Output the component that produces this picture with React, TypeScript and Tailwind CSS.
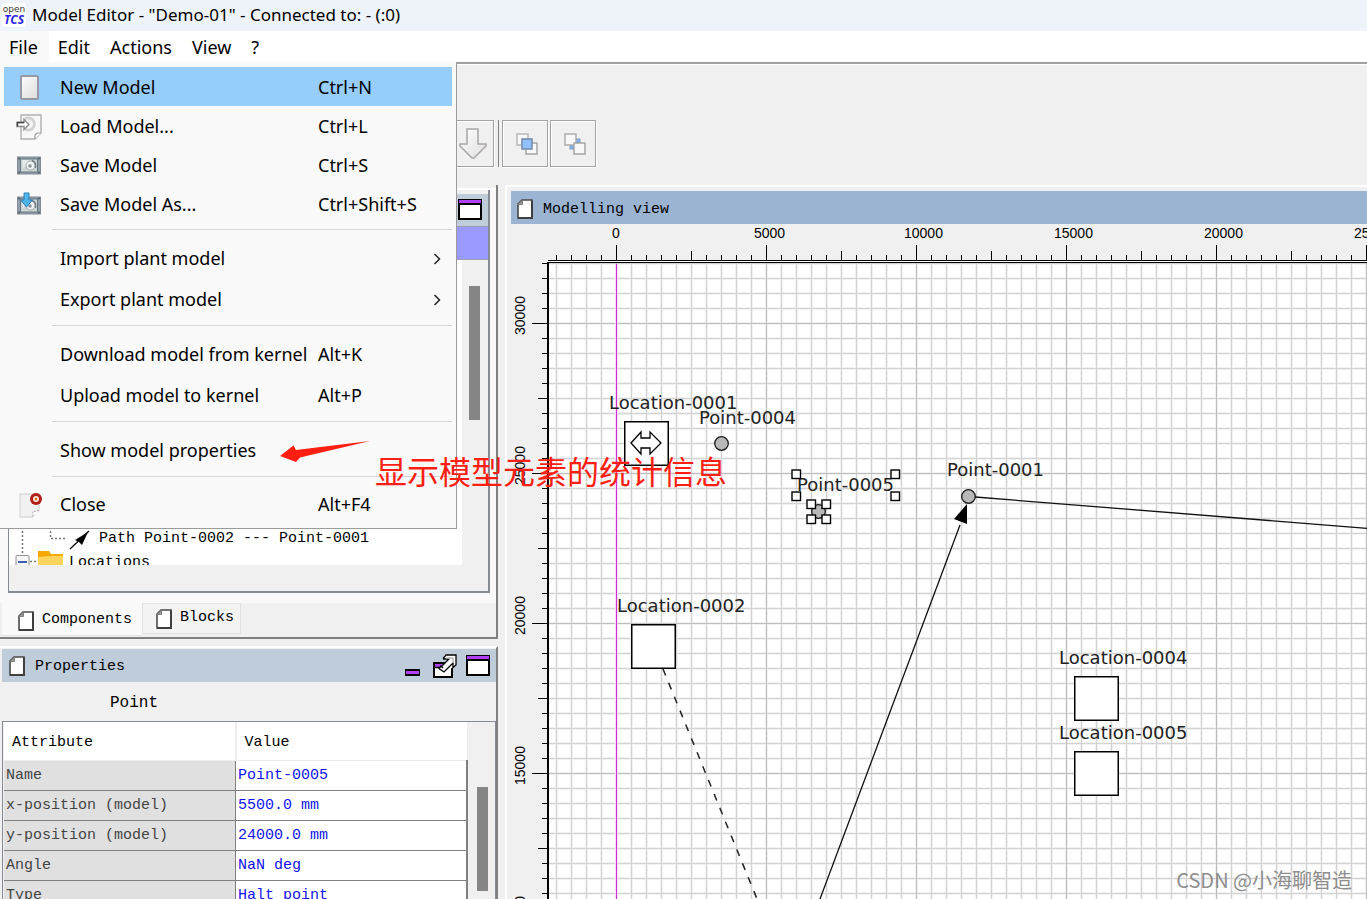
import React from "react";

const MONO = "font-['Liberation_Mono','Noto_Sans_CJK_SC',monospace]";

function DocIcon() {
  return (
    <svg width="16" height="20" viewBox="0 0 16 20" aria-hidden="true">
      <path d="M5 1H15V19H1V5Z" fill="#fff" stroke="#4a4a4a" strokeWidth="1.6" />
      <path d="M1 5.5 5.5 1V5.5Z" fill="#9a9a9a" stroke="#7d7d7d" strokeWidth="1" />
      <path d="M15 1.5V19H1" fill="none" stroke="#3f3f3f" strokeWidth="2" />
    </svg>
  );
}

function MaximizeIcon() {
  return (
    <svg width="24" height="21" viewBox="0 0 24 21" className="block" aria-hidden="true" shapeRendering="crispEdges">
      <rect width="24" height="21" fill="#000" />
      <rect x="1" y="1" width="22" height="3" fill="#b040f0" />
      <rect x="2" y="6" width="20" height="13" fill="#fff" />
    </svg>
  );
}

function MinimizeIcon() {
  return (
    <svg width="15" height="7" viewBox="0 0 15 7" className="block" aria-hidden="true" shapeRendering="crispEdges">
      <rect width="15" height="7" fill="#000" />
      <rect x="1" y="2" width="13" height="3" fill="#b040f0" />
    </svg>
  );
}

function DetachIcon() {
  return (
    <svg width="24" height="24" viewBox="0 0 24 24" className="block" aria-hidden="true">
      <path d="M1 9H19V23H1Z" fill="#fff" stroke="#000" strokeWidth="2" />
      <path d="M2 10H18V13H2Z" fill="#b040f0" />
      <path d="M2 13.500H18" stroke="#000" strokeWidth="1.500" />
      <path d="M11 1H23V12L20 13L11 20L6 15L8 12L15 6L10 4Z" fill="#fff" />
      <path d="M10 4.500 13 1H23V11L20 13.500V9L11 18L6 14.500 8 12 10 14M9 12 16 5H10" fill="none" stroke="#000" strokeWidth="1.300" />
      <path d="M13 4H20V9" fill="none" stroke="#bbb" strokeWidth="1.500" />
    </svg>
  );
}

function Logo() {
  return (
    <svg width="24" height="24" viewBox="0 0 24 24" role="img" aria-label="openTCS">
      <rect width="24" height="24" rx="2" fill="#fff" />
      <text x="12" y="9" textAnchor="middle" fontSize="9" fill="#333" className="font-['DejaVu_Sans',sans-serif]">open</text>
      <text x="12" y="21" textAnchor="middle" fontSize="12" fontWeight="700" fontStyle="italic" fill="#2a22e8" className="font-['Open_Sans',sans-serif]">TCS</text>
    </svg>
  );
}

function NewIcon() {
  return (
    <svg width="26" height="26" viewBox="0 0 26 26" aria-hidden="true">
      <defs>
        <linearGradient id="sheet" x1="0" y1="0" x2="1" y2="1">
          <stop offset="0" stopColor="#fdfdfd" />
          <stop offset="1" stopColor="#dcdcdc" />
        </linearGradient>
      </defs>
      <rect x="5" y="1" width="17" height="23" rx="1" fill="url(#sheet)" stroke="#9499a3" strokeWidth="2" />
    </svg>
  );
}

function LoadIcon() {
  return (
    <svg width="26" height="26" viewBox="0 0 26 26" aria-hidden="true">
      <path d="M5 1H25V19L19 25H5Z" fill="#f8f8f8" stroke="#b0b0b0" strokeWidth="1.400" />
      <path d="M19 25V21L21 19H25" fill="#fff" stroke="#9a9a9a" strokeWidth="1.200" />
      <path d="M9 5A6 6 0 1 1 9 15" fill="none" stroke="#d2d2d2" strokeWidth="3" />
      <path d="M1 8.500H8V5.500L13 10.500L8 15.500V12.500H1Z" fill="#fff" stroke="#8a8a8a" strokeWidth="1.400" />
      <path d="M1.500 12.500V8.500H8" fill="none" stroke="#444" strokeWidth="1.400" />
    </svg>
  );
}

function DiskShape({ top }: { top: number }) {
  return (
    <g>
      <rect x="1.500" y={top} width="23" height="17" fill="#93a0aa" stroke="#7f8c96" strokeWidth="1" />
      <rect x="4.500" y={top + 2} width="17" height="13" fill="#cdd4d6" stroke="#667580" strokeWidth="1" />
      <path d={`M6 ${top + 3}H13L7 ${top + 12}Z`} fill="#e3e8e9" />
      <circle cx="14.500" cy={top + 8.5} r="4.500" fill="#eef1f1" stroke="#a3adb1" />
      <circle cx="14" cy={top + 9} r="1.800" fill="#8a969b" />
      <path d={`M16 ${top + 3.5}Q20.500 ${top + 5} 19.500 ${top + 11}`} fill="none" stroke="#6e7c82" strokeWidth="1.400" />
      <circle cx="3" cy={top + 1.5} r="0.900" fill="#4a5862" />
      <circle cx="23" cy={top + 1.5} r="0.900" fill="#4a5862" />
      <circle cx="3" cy={top + 15.5} r="0.900" fill="#4a5862" />
      <circle cx="23" cy={top + 15.5} r="0.900" fill="#4a5862" />
    </g>
  );
}

function SaveIcon() {
  return (
    <svg width="26" height="26" viewBox="0 0 26 26" aria-hidden="true">
      <DiskShape top={4} />
    </svg>
  );
}

function SaveAsIcon() {
  return (
    <svg width="26" height="26" viewBox="0 0 26 26" aria-hidden="true">
      <DiskShape top={5} />
      <path d="M8 1H13V8H16.500L10.500 15L4.500 8H8Z" fill="#4fb4ea" stroke="#2c7fb5" strokeWidth="1" />
    </svg>
  );
}

function CloseIcon() {
  return (
    <svg width="26" height="26" viewBox="0 0 26 26" aria-hidden="true">
      <path d="M4 2H23V18L16 25H4Z" fill="#f1f1f1" stroke="#dadada" strokeWidth="1.400" />
      <path d="M17 24.500V19.500L23 18.500" fill="#fff" stroke="#a8a8a8" strokeDasharray="2 1" />
      <circle cx="20" cy="7" r="6" fill="#b3201a" />
      <circle cx="20" cy="7" r="3" fill="#f6e6d4" />
      <circle cx="20" cy="7" r="1.200" fill="#d0661c" />
    </svg>
  );
}

type Item = { label: string; keys?: string; icon?: React.ReactNode; sub?: boolean; active?: boolean; tall?: boolean };

const MENU: Item[][] = [
  [
    { label: "New Model", keys: "Ctrl+N", icon: <NewIcon />, active: true },
    { label: "Load Model...", keys: "Ctrl+L", icon: <LoadIcon /> },
    { label: "Save Model", keys: "Ctrl+S", icon: <SaveIcon /> },
    { label: "Save Model As...", keys: "Ctrl+Shift+S", icon: <SaveAsIcon /> },
  ],
  [
    { label: "Import plant model", sub: true, tall: true },
    { label: "Export plant model", sub: true, tall: true },
  ],
  [
    { label: "Download model from kernel", keys: "Alt+K", tall: true },
    { label: "Upload model to kernel", keys: "Alt+P", tall: true },
  ],
  [{ label: "Show model properties", tall: true }],
  [{ label: "Close", keys: "Alt+F4", icon: <CloseIcon /> }],
];

function FileMenu() {
  return (
    <div role="menu" aria-label="File" className="absolute top-full left-0 z-10 w-[457px] border-r border-b border-[#9b9b9b] bg-[#f9f9f9] px-1 pt-[5px] pb-[5px]">
      {MENU.map((group, g) => (
        <div key={g}>
          {g > 0 && (
            <div role="separator" className="ml-12 flex h-[14px] items-center pb-[2px]">
              <div className="h-px w-full bg-[#d6d6d6]" />
            </div>
          )}
          {group.map((item) => (
            <button
              key={item.label}
              role="menuitem"
              className={`grid w-full grid-cols-[56px_258px_1fr_19px] items-center pt-[2px] text-left whitespace-nowrap ${item.tall ? "h-[41px]" : "h-[39px]"} ${item.active ? "bg-[#96cdfb]" : ""}`}
            >
              <span className="pl-3">{item.icon}</span>
              <span>{item.label}</span>
              <span>{item.keys}</span>
              <span>
                {item.sub && (
                  <svg width="8" height="12" viewBox="0 0 8 12" aria-hidden="true">
                    <path d="M1.500 1 6.500 6 1.500 11" fill="none" stroke="#222" strokeWidth="1.500" />
                  </svg>
                )}
              </span>
            </button>
          ))}
        </div>
      ))}
    </div>
  );
}

function ToolButton({ label, children }: { label: string; children: React.ReactNode }) {
  return (
    <button aria-label={label} className="flex h-[47px] w-[46px] items-center justify-center border border-[#a3a3a3] shadow-[1px_1px_0_#fff,inset_1px_1px_0_#fff]">
      {children}
    </button>
  );
}

function Toolbar() {
  return (
    <div className="flex h-[121px] items-center gap-[2px] border-t border-white pt-[55px] pb-[18px] pl-[448px]">
      <ToolButton label="Send to back">
        <svg width="28" height="32" viewBox="0 0 28 32" className="ml-[3px]" aria-hidden="true">
          <defs>
            <linearGradient id="arrow" x1="0" y1="0" x2="1" y2="1">
              <stop offset="0" stopColor="#ffffff" />
              <stop offset="1" stopColor="#dedede" />
            </linearGradient>
          </defs>
          <path d="M8 1H19V16H27V18L15 30H13L1 18V16H8Z" fill="url(#arrow)" stroke="#a9a5a9" strokeWidth="1.500" />
        </svg>
      </ToolButton>
      <div className="mr-px ml-[2px] h-[47px] w-px bg-[#808080]" />
      <ToolButton label="Group">
        <svg width="22" height="22" viewBox="0 0 22 22" className="ml-[3px]" aria-hidden="true">
          <rect x="1" y="1" width="11" height="11" fill="#f8f8f8" stroke="#b4b4b4" strokeWidth="1.400" />
          <rect x="10" y="10" width="11" height="11" fill="#f8f8f8" stroke="#a0a0a0" strokeWidth="1.400" />
          <rect x="6" y="6" width="10" height="10" fill="#8fc0ff" stroke="#7a8ea8" strokeWidth="1.600" />
        </svg>
      </ToolButton>
      <ToolButton label="Ungroup">
        <svg width="22" height="22" viewBox="0 0 22 22" className="ml-[3px]" aria-hidden="true">
          <rect x="6" y="6" width="10" height="10" fill="#7fb2f8" stroke="#7c9cc8" strokeWidth="1" />
          <rect x="1" y="1" width="11" height="11" fill="#f8f8f8" stroke="#a9a9a9" strokeWidth="1.400" />
          <rect x="10" y="10" width="11" height="11" fill="#f8f8f8" stroke="#a0a0a0" strokeWidth="1.400" />
        </svg>
      </ToolButton>
    </div>
  );
}

function ComponentsPanel() {
  return (
    <section className="flex h-[454px] shrink-0 flex-col border-r-2 border-b-2 border-[#808080] bg-[#f0f0f0]">
      <div className="mt-[3px] flex min-h-0 flex-1 flex-col border-t-2 border-white bg-[#f9f9f9] pr-[6px] pb-[10px] pl-[8px]">
        <div className="flex min-h-0 flex-1 flex-col border-r-2 border-b-2 border-[#858a94] bg-[#f0f0f0]">
          <div className="flex h-[36px] items-center justify-end border-t-4 border-[#f0f0f0] bg-[#bfccd9] pr-[6px] pb-px">
            <button aria-label="Maximize components"><MaximizeIcon /></button>
          </div>
          <div className="h-[34px] border-y border-[#9d9db5] bg-[#9999ff]" />
          <div className="flex min-h-0 flex-1 border-l border-[#858a94] pb-[26px]">
            <div className={`flex flex-1 flex-col justify-end overflow-hidden bg-white text-[15px] ${MONO}`}>
              <div className="flex h-6 items-center">
                <svg width="90" height="24" viewBox="0 0 90 24" aria-hidden="true">
                  <path d="M13.500 0V24M41.500 0V11.500H56" fill="none" stroke="#777" strokeWidth="1.500" strokeDasharray="2 2" />
                  <path d="M61 22 80 4" stroke="#000" strokeWidth="1.200" />
                  <path d="M66 13 79 5 73 18 70 15Z" fill="#000" />
                </svg>
                <span className="whitespace-nowrap">Path Point-0002 --- Point-0001</span>
              </div>
              <div className="h-[14px] overflow-hidden">
                <div className="flex h-6 items-center">
                  <svg width="60" height="24" viewBox="0 0 60 24" aria-hidden="true">
                    <rect x="7" y="4.500" width="13" height="13" rx="1" fill="#f5f5f5" stroke="#909090" />
                    <path d="M9 11H18" stroke="#3b5fae" strokeWidth="2" />
                    <path d="M13.500 0V4M21 10.500H28" stroke="#777" strokeWidth="1.500" strokeDasharray="2 2" />
                    <path d="M29 0H40L42 3H54V20H29Z" fill="#f5a800" />
                    <path d="M29 6 42 5H54V22H29Z" fill="#ffd45c" />
                  </svg>
                  <span>Locations</span>
                </div>
              </div>
            </div>
            <div className="w-[26px] pt-[26px] pl-[7px]">
              <div className="h-[134px] w-[11px] bg-[#858585]" />
            </div>
          </div>
        </div>
      </div>
      <div role="tablist" className={`flex h-[34px] items-start pl-[2px] text-[15px] ${MONO}`}>
        <button role="tab" aria-selected="true" className="flex h-[33px] w-[140px] items-center gap-2 border-b border-[#e2e2e2] bg-[#f9f9f9] pt-[3px] pl-[16px]">
          <DocIcon />Components
        </button>
        <button role="tab" aria-selected="false" className="flex h-[31px] w-[99px] items-center gap-2 border border-[#e2e2e2] bg-[#f3f3f3] pl-[13px]">
          <DocIcon />Blocks
        </button>
      </div>
    </section>
  );
}

const ROWS: [string, string][] = [
  ["Name", "Point-0005"],
  ["x-position (model)", "5500.0 mm"],
  ["y-position (model)", "24000.0 mm"],
  ["Angle", "NaN deg"],
  ["Type", "Halt point"],
];

function PropertiesPanel() {
  return (
    <section className={`mt-[7px] flex min-h-0 flex-1 flex-col border-t-2 border-r-2 border-t-white border-r-[#808080] pt-px pl-[2px] text-[15px] ${MONO}`}>
      <header className="flex h-[33px] shrink-0 items-center bg-[#bfccd9] pr-[6px] pl-[7px]">
        <DocIcon />
        <h2 className="flex-1 pt-1 pl-[10px]">Properties</h2>
        <button aria-label="Minimize" className="mt-[13px] mr-[13px]"><MinimizeIcon /></button>
        <button aria-label="Detach" className="mr-[9px]"><DetachIcon /></button>
        <button aria-label="Maximize"><MaximizeIcon /></button>
      </header>
      <div className="flex h-[39px] shrink-0 items-center pt-[2px] pl-[108px] text-[16px]">Point</div>
      <div className="flex min-h-0 flex-1 overflow-hidden border-t border-r border-l border-[#858a94]">
        <table className="ml-px flex-1 table-fixed border-collapse text-left">
          <thead>
            <tr className="h-[38px] bg-white">
              <th className="w-1/2 border-r-2 border-b border-[#ececec] pt-1 pl-2 font-normal">Attribute</th>
              <th className="border-r border-b border-[#ececec] pt-1 pl-2 font-normal">Value</th>
            </tr>
          </thead>
          <tbody>
            {ROWS.map(([k, v]) => (
              <tr key={k} className="h-[30px]">
                <td className="border-r border-b border-[#808080] bg-[#e0e0e0] pt-[2px] pl-[2px] text-[#444]">{k}</td>
                <td className="border-r-2 border-b border-[#808080] bg-white pt-[2px] pl-[2px] text-[#1010f0]">{v}</td>
              </tr>
            ))}
          </tbody>
        </table>
        <div className="w-[27px] pt-[65px] pl-[9px]">
          <div className="h-[104px] w-[11px] bg-[#858585]" />
        </div>
      </div>
    </section>
  );
}

const H_TICKS = Array.from({ length: 80 }, (_, i) => i - 4);
const V_TICKS = Array.from({ length: 60 }, (_, i) => i - 4);

const tickLength = (i: number) => (i % 10 === 0 ? 15 : i % 5 === 0 ? 9 : 5);

function HorizontalRuler() {
  return (
    <svg className="block h-[38px] w-full shrink-0" aria-label="Horizontal ruler" shapeRendering="crispEdges">
      <path d="M37 36.500H4000" stroke="#000" />
      <path d="M37 37.500H4000" stroke="#fff" />
      {H_TICKS.map((i) => (
        <rect key={i} x={105 + i * 15} y={36 - tickLength(i)} width="1" height={tickLength(i)} />
      ))}
      {H_TICKS.filter((i) => i >= 0 && i % 10 === 0).map((i) => (
        <text key={i} x={105 + i * 15 + (i === 0 ? -4 : -12)} y="14" fontSize="14" className="font-['Liberation_Sans',sans-serif]">
          {i * 500}
        </text>
      ))}
    </svg>
  );
}

function VerticalRuler() {
  return (
    <svg className="block h-full w-[36px] shrink-0" aria-label="Vertical ruler" shapeRendering="crispEdges">
      {V_TICKS.map((i) => (
        <rect key={i} x={36 - tickLength(i)} y={61 + i * 15} width={tickLength(i)} height="1" />
      ))}
      {V_TICKS.filter((i) => i >= 0 && i % 10 === 0 && i <= 50).map((i) => (
        <text key={i} transform={`translate(14 ${73 + i * 15}) rotate(-90)`} fontSize="14" className="font-['Liberation_Sans',sans-serif]">
          {30000 - i * 500}
        </text>
      ))}
    </svg>
  );
}

const LOCATIONS = [
  { name: "Location-0001", x: 75, y: 158, lx: 60, ly: 146 },
  { name: "Location-0002", x: 82, y: 361, lx: 68, ly: 349 },
  { name: "Location-0004", x: 525, y: 413, lx: 510, ly: 401 },
  { name: "Location-0005", x: 525, y: 488, lx: 510, ly: 476 },
];

const POINTS = [
  { name: "Point-0004", x: 172, y: 180, lx: 150, ly: 161 },
  { name: "Point-0001", x: 419, y: 233, lx: 398, ly: 213 },
  { name: "Point-0005", x: 269, y: 248, lx: 248, ly: 228 },
];

const HANDLES = [
  [247, 211], [346, 211], [247, 233], [346, 233],
  [262, 241], [277, 241], [262, 256], [277, 256],
];

function Diagram() {
  return (
    <svg className="block h-full w-full bg-white" aria-label="Plant model">
      <defs>
        <pattern id="minor" x="7" y="0" width="15" height="15" patternUnits="userSpaceOnUse">
          <path d="M14 0H15V15H14ZM1 0H2V15H1ZM0 1H15V2H0ZM0 14H15V15H0Z" fill="#f2f2f2" />
          <path d="M0 0H1V15H0ZM0 0H15V1H0Z" fill="#d3d3d3" />
        </pattern>
        <pattern id="major" x="67" y="60" width="150" height="150" patternUnits="userSpaceOnUse">
          <path d="M0 0H1V150H0ZM0 0H150V1H0Z" fill="#bdbdbd" />
        </pattern>
      </defs>
      <rect width="100%" height="100%" fill="url(#minor)" />
      <rect width="100%" height="100%" fill="url(#major)" />
      <rect x="66" y="1" width="3" height="100%" fill="#f6dcf6" />
      <rect x="67" y="1" width="1" height="100%" fill="#d22fd2" />
      <path d="M426 234 1226 298M411 262 131 1010" stroke="#111" strokeWidth="1.300" fill="none" />
      <path d="M418 241 405 256 418 261Z" fill="#000" />
      <path d="M114 406 278 807" stroke="#222" strokeWidth="1.500" strokeDasharray="7 8" fill="none" />
      {LOCATIONS.map((l) => (
        <g key={l.name}>
          <rect x={l.x + 0.75} y={l.y + 0.75} width="43.500" height="43.500" fill="#fff" stroke="#000" strokeWidth="1.500" />
          <text x={l.lx} y={l.ly} fontSize="18" fill="#222" className="font-['DejaVu_Sans',sans-serif]">{l.name}</text>
        </g>
      ))}
      <path d="M82 180 92 169V175H101V169L112 180 101 191V185H92V191Z" fill="#fff" stroke="#000" strokeWidth="1.300" />
      {POINTS.map((p) => (
        <g key={p.name}>
          <circle cx={p.x + 0.5} cy={p.y + 0.5} r="6.800" fill="#b8b8b8" stroke="#1a1a1a" strokeWidth="1.300" />
          <text x={p.lx} y={p.ly} fontSize="18" fill="#222" className="font-['DejaVu_Sans',sans-serif]">{p.name}</text>
        </g>
      ))}
      {HANDLES.map(([x, y]) => (
        <rect key={`${x}-${y}`} x={x - 4} y={y - 4} width="8.500" height="8.500" fill="#fff" stroke="#000" strokeWidth="1.400" />
      ))}
    </svg>
  );
}

function ModellingView() {
  return (
    <section className="ml-[7px] flex min-w-0 flex-1 flex-col border-t-2 border-l-2 border-white">
      <div className="flex min-h-0 flex-1 flex-col pt-[4px] pl-[4px]">
        <header className={`flex h-[33px] shrink-0 items-center gap-[10px] bg-[#9ab4d1] pt-[2px] pl-[6px] text-[15px] ${MONO}`}>
          <DocIcon />
          <h2 className="pt-[3px]">Modelling view</h2>
        </header>
        <HorizontalRuler />
        <div className="flex min-h-0 flex-1 overflow-hidden">
          <VerticalRuler />
          <div className="min-w-0 flex-1 border-t border-l-2 border-black">
            <Diagram />
          </div>
        </div>
      </div>
    </section>
  );
}

function Annotation() {
  return (
    <>
      <svg width="92" height="24" viewBox="0 0 92 24" className="absolute top-[439px] left-[279px] z-20" aria-hidden="true">
        <path d="M1 17 14.500 6.500 17 11 91 2 21 18.500 17 23Z" fill="#ff1e12" />
      </svg>
      <p className="absolute top-[446px] left-[375px] z-20 font-['Noto_Sans_CJK_SC',sans-serif] text-[32px] leading-[48px] whitespace-nowrap text-[#ff1e12]">
        显示模型元素的统计信息
      </p>
    </>
  );
}

export default function App() {
  return (
    <div className="relative flex h-screen flex-col overflow-hidden bg-[#f0f0f0] font-['Noto_Sans','Noto_Sans_CJK_SC',sans-serif] text-[18px] text-black">
      <header className="flex h-[31px] shrink-0 items-center gap-[6px] bg-[#eef3f9] pb-[2px] pl-[2px] text-[17px]">
        <Logo />
        <h1>Model Editor - "Demo-01" - Connected to: - (:0)</h1>
      </header>
      <nav className="relative flex h-[33px] shrink-0 items-stretch border-b-2 border-[#a0a0a0] bg-white">
        <button className="bg-[#f9f9f9] pt-px pr-[11px] pl-[9px]">File</button>
        <button className="pt-px pr-[11px] pl-[9px]">Edit</button>
        <button className="pt-px pr-[11px] pl-[9px]">Actions</button>
        <button className="pt-px pr-[11px] pl-[9px]">View</button>
        <button className="pt-px pr-[11px] pl-[9px]">?</button>
        <FileMenu />
      </nav>
      <Toolbar />
      <main className="flex min-h-0 flex-1">
        <div className="flex w-[498px] shrink-0 flex-col">
          <ComponentsPanel />
          <PropertiesPanel />
        </div>
        <ModellingView />
      </main>
      <Annotation />
      <p className="absolute right-[15px] bottom-1 z-20 font-['Noto_Sans_CJK_SC',sans-serif] text-[20px] leading-[30px] text-[#8e8e8e]">
        CSDN @小海聊智造
      </p>
    </div>
  );
}
